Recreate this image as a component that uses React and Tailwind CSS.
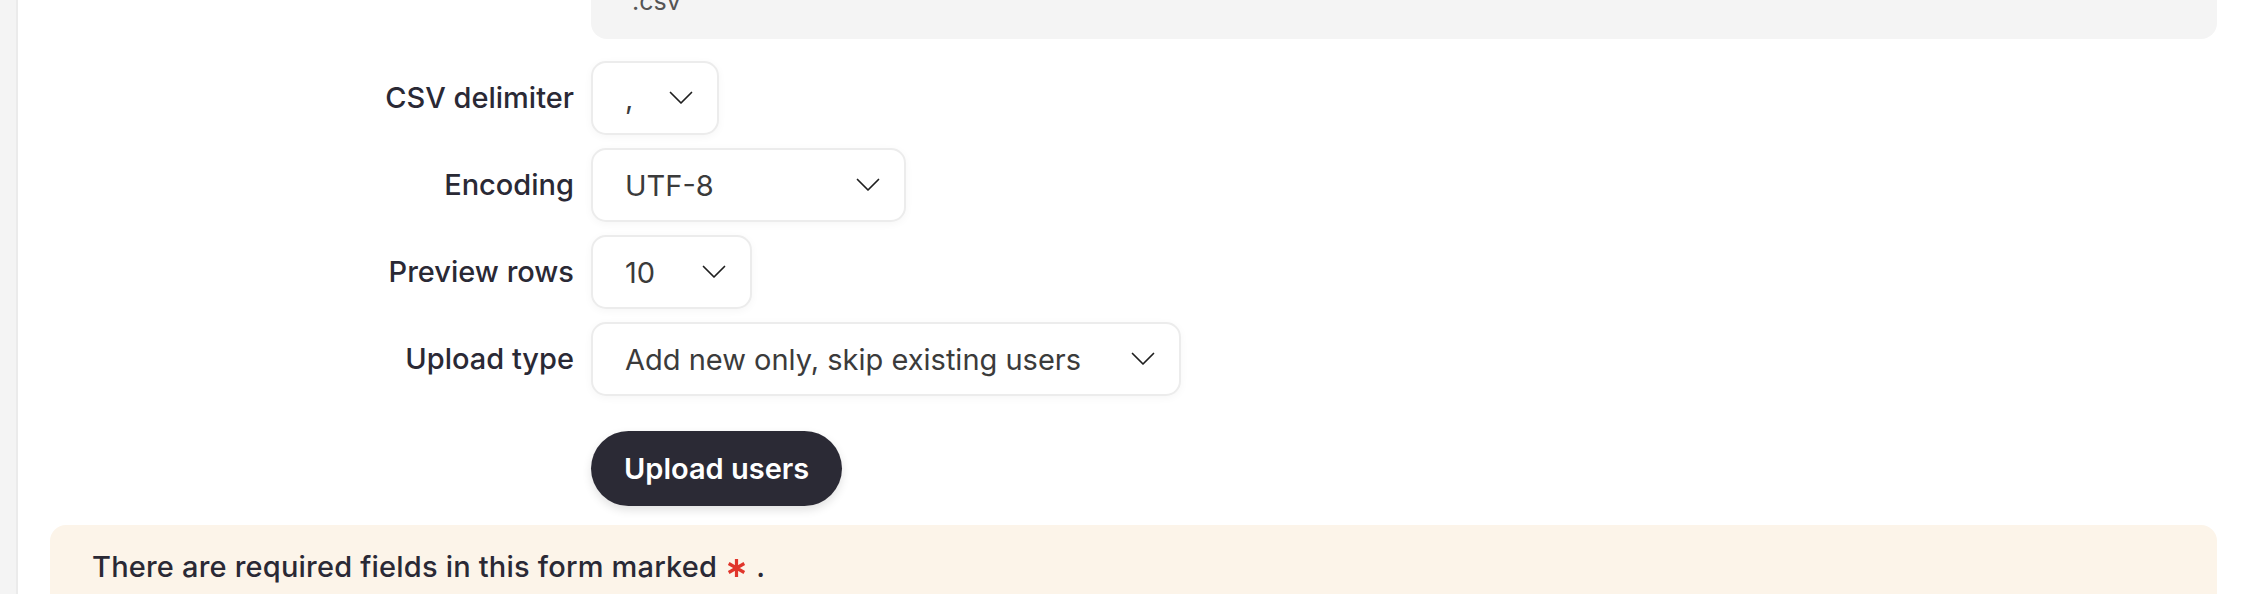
import React from "react";

function Chevron() {
  return (
    <svg width="24" height="14" viewBox="0 0 24 14" fill="none" className="shrink-0">
      <path d="M1.5 1.5 L12 12 L22.5 1.5" stroke="#1f1f1f" strokeWidth="1.7" strokeLinecap="round" strokeLinejoin="round" />
    </svg>
  );
}

function Asterisk() {
  return (
    <svg width="19" height="20" viewBox="0 0 19 20" fill="none" className="mx-[10px] inline-block align-[-1px]">
      <path d="M9.5 1 V19 M1.7 5.5 L17.3 14.5 M1.7 14.5 L17.3 5.5" stroke="#e0352b" strokeWidth="3.2" />
    </svg>
  );
}

function Select({ value, width }) {
  return (
    <div
      className={`flex h-[74px] items-center justify-between rounded-[15px] border-2 border-[#ececec] bg-white pl-[32px] pr-[24px] shadow-[0_2px_8px_rgba(0,0,0,0.04)] ${width}`}
    >
      <span className="text-[29px] leading-none text-[#3b3b3b]">{value}</span>
      <Chevron />
    </div>
  );
}

function Row({ label, children }) {
  return (
    <div className="flex items-center">
      <div className="w-[541px] shrink-0 pr-[17px] text-right text-[29px] font-medium text-[#2a2935]">{label}</div>
      {children}
    </div>
  );
}

export default function App() {
  return (
    <div className="flex h-[594px] w-full overflow-hidden bg-white" style={{ fontFamily: "Inter, 'Noto Sans', sans-serif" }}>
      <div className="w-[18px] shrink-0 border-r-2 border-[#ebebeb] bg-[#f4f4f4]" />
      <div className="flex min-w-0 flex-1 flex-col pl-[32px] pr-[49px]">
        <div className="flex">
          <div className="w-[541px] shrink-0" />
          <div className="-mt-[40px] flex h-[79px] flex-1 items-start rounded-b-[16px] bg-[#f4f4f4] pl-[41px] pt-[29px]">
            <span className="text-[25px] leading-none text-[#555]">.csv</span>
          </div>
        </div>
        <div className="mt-[22px] flex flex-col gap-[13px]">
          <Row label="CSV delimiter">
            <Select value="," width="w-[128px]" />
          </Row>
          <Row label="Encoding">
            <Select value="UTF-8" width="w-[315px]" />
          </Row>
          <Row label="Preview rows">
            <Select value="10" width="w-[161px]" />
          </Row>
          <Row label="Upload type">
            <Select value="Add new only, skip existing users" width="w-[590px]" />
          </Row>
        </div>
        <div className="mt-[35px] flex">
          <div className="w-[541px] shrink-0" />
          <button className="flex h-[75px] items-center rounded-full bg-[#2b2a35] px-[33px] text-[29px] font-semibold text-white shadow-[0_4px_10px_rgba(0,0,0,0.12)]">
            Upload users
          </button>
        </div>
        <div className="mt-[19px] flex-1 rounded-t-[16px] bg-[#fcf4e9] pl-[42px] pt-[20px]">
          <span className="text-[29px] font-medium tracking-[0.2px] text-[#2a2935]">
            There are required fields in this form marked
            <Asterisk />.
          </span>
        </div>
      </div>
    </div>
  );
}
